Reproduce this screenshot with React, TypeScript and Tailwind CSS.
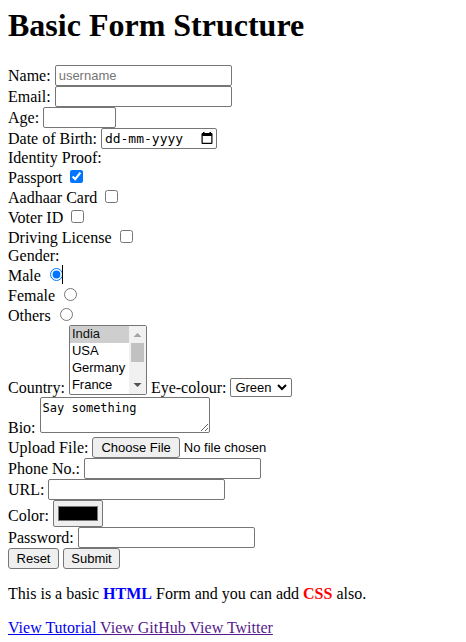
import React from "react";

const sans = 'font-["Liberation_Sans",Arial,sans-serif] text-[13px]';
const mono = 'font-["DejaVu_Sans_Mono",monospace]';
const box = "rounded-[2px] border border-[#767676] bg-white";
const button = `${sans} h-[21px] rounded-[3px] border border-[#767676] bg-[#efefef] leading-[18px]`;

function TextRow({
  id,
  label,
  type = "text",
  placeholder,
  width = "w-[177px]",
}: {
  id: string;
  label: string;
  type?: string;
  placeholder?: string;
  width?: string;
}) {
  return (
    <div className="flex h-[21px] items-center gap-1">
      <label htmlFor={id}>{label}</label>
      <input
        id={id}
        type={type}
        placeholder={placeholder}
        className={`${sans} ${box} ${width} h-[21px] px-[3px] placeholder:text-[#757575]`}
      />
    </div>
  );
}

function CheckRow({ id, label, checked }: { id: string; label: string; checked?: boolean }) {
  return (
    <div className="flex h-5 items-end gap-2">
      <label htmlFor={id}>{label}</label>
      <input id={id} type="checkbox" defaultChecked={checked} className="mb-1 size-[13px]" />
    </div>
  );
}

function RadioRow({ id, label, checked }: { id: string; label: string; checked?: boolean }) {
  return (
    <div className="flex h-5 items-end gap-[9px]">
      <label htmlFor={id}>{label}</label>
      <span className="relative mb-1 flex">
        <input id={id} name="gender" type="radio" defaultChecked={checked} className="size-[13px]" />
        {checked && <span className="absolute -top-[3px] right-0 h-[19px] w-px bg-black" />}
      </span>
    </div>
  );
}

export default function App() {
  return (
    <main className='bg-white px-2 pt-[7px] pb-1 font-["Liberation_Serif","Times_New_Roman",serif] text-[16px] leading-[18px] text-black'>
      <h1 className="mb-[21px] text-[32px] leading-[37px] font-bold">Basic Form Structure</h1>
      <form onSubmit={(e) => e.preventDefault()}>
        <TextRow id="name" label="Name:" placeholder="username" />
        <TextRow id="email" label="Email:" type="email" />
        <TextRow id="age" label="Age:" width="w-[73px]" />
        <div className="flex h-[21px] items-center gap-1">
          <label htmlFor="dob">Date of Birth:</label>
          <span className="relative flex">
            <input
              id="dob"
              type="text"
              placeholder="dd-mm-yyyy"
              className={`${mono} ${box} h-[21px] w-[116px] px-[3px] text-[13px] placeholder:text-black`}
            />
            <svg viewBox="0 0 12 12" className="absolute top-[4px] right-[4px] size-3" aria-hidden="true">
              <path
                fillRule="evenodd"
                d="M2 0h1.500v1h5V0H10v1h.5A1 1 0 0 1 11.500 2v9a1 1 0 0 1-1 1h-9a1 1 0 0 1-1-1V2a1 1 0 0 1 1-1H2zM1.700 4v6.800h8.600V4z"
              />
            </svg>
          </span>
        </div>
        <p>Identity Proof:</p>
        <CheckRow id="passport" label="Passport" checked />
        <CheckRow id="aadhaar" label="Aadhaar Card" />
        <CheckRow id="voter" label="Voter ID" />
        <CheckRow id="driving" label="Driving License" />
        <p>Gender:</p>
        <RadioRow id="male" label="Male" checked />
        <RadioRow id="female" label="Female" />
        <RadioRow id="others" label="Others" />
        <div className="flex items-end gap-1">
          <label htmlFor="country">Country:</label>
          <span className="relative mb-[2px] flex">
            <select
              id="country"
              size={4}
              defaultValue="India"
              className={`${sans} ${box} h-[70px] w-[78px] overflow-hidden leading-[17px]`}
            >
              <option className="h-[17px] px-[2px]">India</option>
              <option className="h-[17px] px-[2px]">USA</option>
              <option className="h-[17px] px-[2px]">Germany</option>
              <option className="h-[17px] px-[2px]">France</option>
              <option className="h-[17px] px-[2px]">Japan</option>
            </select>
            <span className="absolute inset-y-px right-px flex w-[17px] flex-col items-center bg-[#f1f1f1]">
              <svg viewBox="0 0 17 17" className="size-[17px]" aria-hidden="true">
                <path d="M4.500 11h8l-4-4z" fill="#a3a3a3" />
              </svg>
              <span className="h-[19px] w-[13px] bg-[#c1c1c1]" />
              <svg viewBox="0 0 17 17" className="mt-auto size-[17px]" aria-hidden="true">
                <path d="M4.500 6h8l-4 4z" fill="#505050" />
              </svg>
            </span>
          </span>
          <label htmlFor="eye">Eye-colour:</label>
          <span className="relative flex">
            <select id="eye" className={`${sans} ${box} h-[19px] w-[62px] appearance-none pl-1 leading-[17px]`}>
              <option>Green</option>
              <option>Blue</option>
              <option>Brown</option>
            </select>
            <svg
              viewBox="0 0 10 7"
              className="pointer-events-none absolute top-[6px] right-[5px] h-[7px] w-[10px]"
              aria-hidden="true"
            >
              <path d="M1 1l4 4 4-4" fill="none" stroke="black" strokeWidth="2" />
            </svg>
          </span>
        </div>
        <div className="flex items-end gap-1">
          <label htmlFor="bio">Bio:</label>
          <textarea
            id="bio"
            defaultValue="Say something"
            className={`${mono} ${box} mb-1 h-9 w-[170px] overflow-hidden px-[2px] py-[3px] text-[12px] leading-[15px]`}
          />
        </div>
        <div className="flex h-[21px] items-center gap-1">
          <label htmlFor="file">Upload File:</label>
          <input
            id="file"
            type="file"
            className={`${sans} h-[21px] leading-[19px] file:mr-1 file:h-[21px] file:rounded-[3px] file:border file:border-solid file:border-[#767676] file:bg-[#efefef] file:px-2`}
          />
        </div>
        <TextRow id="phone" label="Phone No.:" type="tel" />
        <TextRow id="url" label="URL:" type="url" />
        <div className="flex h-[27px] items-center gap-1">
          <label htmlFor="color" className="pt-1">Color:</label>
          <input
            id="color"
            type="color"
            defaultValue="#000000"
            className="h-[27px] w-[50px] rounded-[2px] border border-[#767676] bg-[#efefef] px-[2px] py-px"
          />
        </div>
        <TextRow id="password" label="Password:" type="password" />
        <div className="flex gap-1">
          <button type="reset" className={`${button} w-[51px]`}>Reset</button>
          <button type="submit" className={`${button} w-[57px]`}>Submit</button>
        </div>
      </form>
      <p className="my-4">
        This is a basic <b className="text-[#0000ff]">HTML</b> Form and you can add{" "}
        <b className="text-[#ff0000]">CSS</b> also.
      </p>
      <nav>
        <a href="#tutorial" className="text-[#0000ee] underline">View Tutorial </a>
        <a href="#github" className="text-[#551a8b] underline">View GitHub </a>
        <a href="#twitter" className="text-[#551a8b] underline">View Twitter</a>
      </nav>
    </main>
  );
}
